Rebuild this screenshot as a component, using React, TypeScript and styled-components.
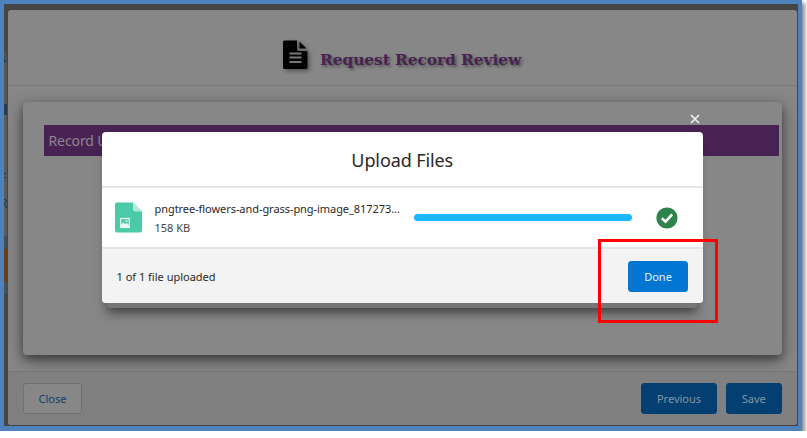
import React from "react";
import styled, { createGlobalStyle } from "styled-components";

const GlobalStyle = createGlobalStyle`
  * { box-sizing: border-box; }
  body { margin: 0; background: #fff; overflow: hidden; font-family: "Noto Sans", "Open Sans", sans-serif; }
`;

const Frame = styled.div`
  position: relative;
  width: 802px;
  height: 431px;
  padding: 6px 1px 0 4px;
  border: 4px solid #4f81bd;
  border-bottom-width: 5px;
  background: #454545;
  box-shadow: 3px 3px 4px rgba(0, 0, 0, 0.45);
`;

const EdgeStrip = styled.div`
  position: absolute;
  left: 0;
  top: 0;
  width: 3px;
  height: 422px;
  display: flex;
  flex-direction: column;
  overflow: hidden;
`;

const EdgePiece = styled.div<{ $h: number; $bg: string }>`
  flex: none;
  height: ${(p) => p.$h}px;
  background: ${(p) => p.$bg};
  color: #173c56;
  font-size: 12px;
  line-height: 12px;
  text-indent: -4px;
`;

const Modal = styled.section`
  position: relative;
  display: flex;
  flex-direction: column;
  width: 789px;
  height: 415px;
  border-radius: 3px;
  background: #878787;
  overflow: hidden;
`;

const ModalHeader = styled.header`
  flex: none;
  height: 76px;
  display: flex;
  padding: 30px 0 0 275px;
  border-bottom: 1px solid #797979;
  svg { flex: none; filter: drop-shadow(2px 2px 2px rgba(0, 0, 0, 0.4)); }
`;

const ModalTitle = styled.h1`
  margin: 7px 0 0 12px;
  font: bold 15.5px/25px "DejaVu Serif", serif;
  letter-spacing: -0.12px;
  white-space: nowrap;
  color: #482253;
  text-shadow: 2px 2px 3px rgba(0, 0, 0, 0.4);
`;

const ModalBody = styled.div`
  flex: 1;
  padding: 16px 15px 16px;
  overflow: hidden;
`;

const Card = styled.div`
  height: 253px;
  padding: 23px 3px 0 21px;
  border-radius: 4px;
  background: #878787;
  box-shadow: 0 4px 8px rgba(0, 0, 0, 0.4), 0 6px 20px rgba(0, 0, 0, 0.3);
`;

const SectionBar = styled.div`
  height: 31px;
  padding-left: 4.5px;
  background: #482253;
  color: #8e8492;
  font-size: 14px;
  line-height: 32px;
  letter-spacing: -0.1px;
`;

const ModalFooter = styled.footer`
  flex: none;
  height: 54px;
  display: flex;
  align-items: flex-start;
  gap: 9px;
  padding: 11px 15.5px 0 15px;
  border-top: 1px solid #767676;
  background: #808080;
`;

type Tone = "bright" | "dim" | "outline";

const fills: Record<Tone, string> = { bright: "#0176d3", dim: "#033f70", outline: "#878787" };
const inks: Record<Tone, string> = { bright: "#e8f3fc", dim: "#8596a3", outline: "#0d4271" };

const Button = styled.button<{ $tone: Tone; $w: number }>`
  flex: none;
  width: ${(p) => p.$w}px;
  height: 31px;
  padding: 0;
  border: 1px solid ${(p) => (p.$tone === "outline" ? "#707070" : fills[p.$tone])};
  border-radius: 3px;
  background: ${(p) => fills[p.$tone]};
  color: ${(p) => inks[p.$tone]};
  font: 11px/29px "Noto Sans", sans-serif;
`;

const Spacer = styled.div`
  flex: 1;
`;

const GhostPanel = styled.div`
  position: absolute;
  left: 103px;
  top: 140px;
  width: 590px;
  height: 164px;
  border-radius: 3px;
  background: #777;
  box-shadow: 0 4px 8px rgba(0, 0, 0, 0.35), 0 5px 14px rgba(0, 0, 0, 0.25);
`;

const Dialog = styled.section`
  position: absolute;
  left: 97.5px;
  top: 128px;
  width: 601.5px;
  height: 171px;
  display: flex;
  flex-direction: column;
  border-radius: 4px;
  background: #fff;
  overflow: hidden;
  color: #2b2826;
`;

const CloseMark = styled.svg`
  position: absolute;
  left: 686px;
  top: 110px;
`;

const DialogTitle = styled.h2`
  flex: none;
  height: 56px;
  margin: 0;
  border-bottom: 2px solid #e5e5e5;
  font-size: 18px;
  font-weight: 400;
  letter-spacing: -0.1px;
  line-height: 57px;
  text-align: center;
`;

const FileRow = styled.div`
  flex: none;
  height: 61px;
  display: flex;
  align-items: center;
  padding-left: 13px;
  border-bottom: 2px solid #e5e5e5;
  svg { flex: none; }
`;

const FileText = styled.div`
  width: 259px;
  margin-left: 13px;
  padding-top: 1px;
  font-size: 11px;
  line-height: 18px;
  white-space: nowrap;
`;

const FileName = styled.div`
  letter-spacing: -0.06px;
`;

const FileSize = styled.div`
  padding-top: 1px;
  color: #444;
`;

const Track = styled.div`
  flex: none;
  width: 218px;
  height: 7px;
  margin-right: 24px;
  border-radius: 4px;
  background: #1bb7ff;
`;

const DialogFooter = styled.footer`
  flex: 1;
  display: flex;
  align-items: center;
  padding: 0 15px 0 15px;
  background: #f3f3f3;
  font-size: 11px;
`;

const Highlight = styled.div`
  position: absolute;
  left: 594px;
  top: 235px;
  width: 120px;
  height: 84px;
  border: 3px solid #f00;
`;

const pieces: [number, string, string?][] = [
  [49, "#454545"], [10, "#505050", "s"], [41, "#585858"], [11, "#293c4b"],
  [57, "#5b5b5b"], [26, "#5b5b5b", "F"], [38, "#5b5b5b", "R"], [13, "#454d55"],
  [33, "#6b3d1b"], [12, "#46515b"], [132, "#454545"],
];

export default function App() {
  return (
    <>
      <GlobalStyle />
      <Frame>
        <EdgeStrip>
          {pieces.map(([h, bg, t], i) => (
            <EdgePiece key={i} $h={h} $bg={bg}>{t}</EdgePiece>
          ))}
        </EdgeStrip>
        <Modal>
          <ModalHeader>
            <svg width="25" height="30" viewBox="0 0 25 30">
              <path d="M1.5 0.5H14v9q0 1.500 1.500 1.500H24.500V27.500q0 1.500-1.500 1.500H1.500Q0 29 0 27.500V2Q0 .5 1.500 .5Z" fill="#020202" />
              <path d="M16.500 1.500 23.500 8.500H16.500Z" fill="#020202" />
              <path d="M6.500 13.500H18.500M6.500 17.500H18.500M6.500 22H18.500" stroke="#777" strokeWidth="1.800" />
            </svg>
            <ModalTitle>Request Record Review</ModalTitle>
          </ModalHeader>
          <ModalBody>
            <Card>
              <SectionBar>Record U</SectionBar>
            </Card>
          </ModalBody>
          <ModalFooter>
            <Button $tone="outline" $w={59}>Close</Button>
            <Spacer />
            <Button $tone="dim" $w={76}>Previous</Button>
            <Button $tone="dim" $w={55.5}>Save</Button>
          </ModalFooter>
        </Modal>
        <GhostPanel />
        <CloseMark width="10" height="10" viewBox="0 0 10 10">
          <path d="M1 1 9 9M9 1 1 9" stroke="#eee" strokeWidth="1.700" />
        </CloseMark>
        <Dialog>
          <DialogTitle>Upload Files</DialogTitle>
          <FileRow>
            <svg width="27" height="31" viewBox="0 0 27 31">
              <path d="M2 0.500H18L27 9.500V28.500Q27 30.500 25 30.500H2Q0 30.500 0 28.500V2.500Q0 .5 2 .5Z" fill="#4bcaa7" />
              <path d="M18 .5 27 9.500H20Q18 9.500 18 7.500Z" fill="#b4eadb" />
              <rect x="5.700" y="16.500" width="8.600" height="9" fill="none" stroke="#e6f8f3" strokeWidth="1.200" />
              <path d="M6 22.500 8.500 20.500 10 22 12 21 14 23V25H6Z" fill="#e6f8f3" />
              <circle cx="11.500" cy="19" r="1" fill="#e6f8f3" />
            </svg>
            <FileText>
              <FileName>pngtree-flowers-and-grass-png-image_817273...</FileName>
              <FileSize>158 KB</FileSize>
            </FileText>
            <Track />
            <svg width="22" height="22" viewBox="0 0 22 22">
              <circle cx="11" cy="11" r="10.600" fill="#2e844a" />
              <path d="M5.800 11.300 9.600 14.700 16.200 7.400" fill="none" stroke="#fff" strokeWidth="2.600" />
            </svg>
          </FileRow>
          <DialogFooter>
            1 of 1 file uploaded
            <Spacer />
            <Button $tone="bright" $w={60}>Done</Button>
          </DialogFooter>
        </Dialog>
        <Highlight />
      </Frame>
    </>
  );
}
